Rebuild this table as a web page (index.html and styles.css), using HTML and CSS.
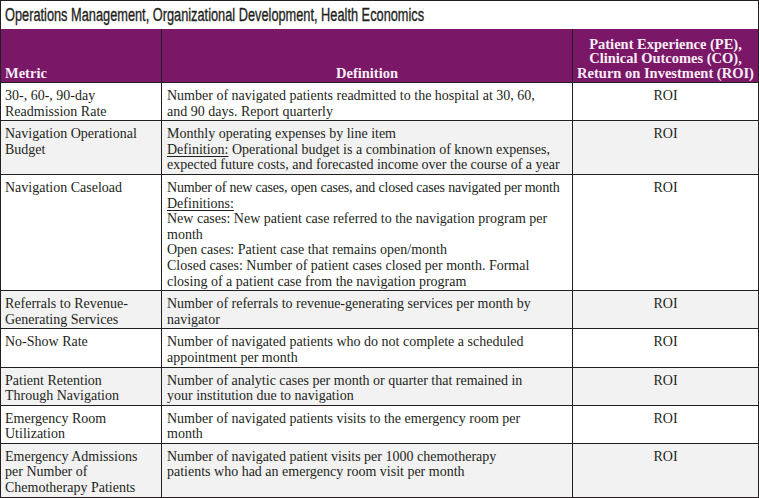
FILE: index.html
```html
<!DOCTYPE html>
<html>
<head>
<meta charset="utf-8">
<link rel="stylesheet" href="styles.css">
</head>
<body>
<div class="frame">
  <div class="title"><span class="title-text">Operations Management, Organizational Development, Health Economics</span></div>
  <table class="metrics">
    <colgroup>
      <col class="c1">
      <col class="c2">
      <col class="c3">
    </colgroup>
    <thead>
      <tr>
        <th class="h-left">Metric</th>
        <th class="h-center">Definition</th>
        <th class="h-center">Patient Experience (PE),<br>Clinical Outcomes (CO),<br>Return on Investment (ROI)</th>
      </tr>
    </thead>
    <tbody>
      <tr>
        <td>30-, 60-, 90-day<br>Readmission Rate</td>
        <td>Number of navigated patients readmitted to the hospital at 30, 60,<br>and 90 days. Report quarterly</td>
        <td class="roi">ROI</td>
      </tr>
      <tr class="alt">
        <td>Navigation Operational<br>Budget</td>
        <td>Monthly operating expenses by line item<br><u>Definition:</u> Operational budget is a combination of known expenses,<br>expected future costs, and forecasted income over the course of a year</td>
        <td class="roi">ROI</td>
      </tr>
      <tr>
        <td>Navigation Caseload</td>
        <td><span class="tight">Number of new cases, open cases, and closed cases navigated per month</span><br><u>Definitions:</u><br>New cases: New patient case referred to the navigation program per<br>month<br>Open cases: Patient case that remains open/month<br>Closed cases: Number of patient cases closed per month. Formal<br>closing of a patient case from the navigation program</td>
        <td class="roi">ROI</td>
      </tr>
      <tr class="alt">
        <td>Referrals to Revenue-<br>Generating Services</td>
        <td>Number of referrals to revenue-generating services per month by<br>navigator</td>
        <td class="roi">ROI</td>
      </tr>
      <tr>
        <td>No-Show Rate</td>
        <td>Number of navigated patients who do not complete a scheduled<br>appointment per month</td>
        <td class="roi">ROI</td>
      </tr>
      <tr class="alt">
        <td>Patient Retention<br>Through Navigation</td>
        <td>Number of analytic cases per month or quarter that remained in<br>your institution due to navigation</td>
        <td class="roi">ROI</td>
      </tr>
      <tr>
        <td>Emergency Room<br>Utilization</td>
        <td>Number of navigated patients visits to the emergency room per<br>month</td>
        <td class="roi">ROI</td>
      </tr>
      <tr class="alt">
        <td>Emergency Admissions<br>per Number of<br>Chemotherapy Patients</td>
        <td>Number of navigated patient visits per 1000 chemotherapy<br>patients who had an emergency room visit per month</td>
        <td class="roi">ROI</td>
      </tr>
    </tbody>
  </table>
</div>
</body>
</html>
```

FILE: styles.css
```css
html, body {
  margin: 0;
  padding: 0;
  background: #ffffff;
}

.frame {
  width: 759px;
  box-sizing: border-box;
  border: 1px solid #231f20;
  border-bottom: none;
  background: #fff;
}

.title {
  height: 28px;
  display: flex;
  align-items: center;
  padding-left: 4px;
  overflow: hidden;
  white-space: nowrap;
}

.title-text {
  display: inline-block;
  font-family: "Liberation Sans", "Arial", sans-serif;
  font-size: 18px;
  color: #231f20;
  -webkit-text-stroke: 0.35px #231f20;
  transform: scaleX(0.71);
  transform-origin: left center;
}

.metrics {
  width: 758px;
  margin-left: -1px;
  border-collapse: collapse;
  table-layout: fixed;
  font-family: "Liberation Serif", "Times New Roman", serif;
  font-size: 14px;
  line-height: 15.6px;
  color: #231f20;
}

.c1 { width: 161px; }
.c2 { width: 411px; }
.c3 { width: 186px; }

.metrics th,
.metrics td {
  border: 1px solid #231f20;
  vertical-align: top;
  padding: 5px 4px 1px 4px;
  text-align: left;
  white-space: nowrap;
}

.metrics td:nth-child(2) {
  padding-left: 5px;
}

.metrics thead th {
  background: #7a1767;
  color: #f7eef6;
  font-size: 14.5px;
  font-weight: bold;
  vertical-align: bottom;
  height: 48px;
  line-height: 14.5px;
  padding: 3px 4px 2px 4px;
  border-top: none;
}

.metrics .h-center {
  text-align: center;
}

.metrics tr.alt td {
  background: #f2f2f2;
}

.metrics td.roi {
  text-align: center;
}

.metrics u {
  text-decoration-thickness: 1px;
  text-underline-offset: 2px;
}

.tight {
  letter-spacing: -0.2px;
}
```
